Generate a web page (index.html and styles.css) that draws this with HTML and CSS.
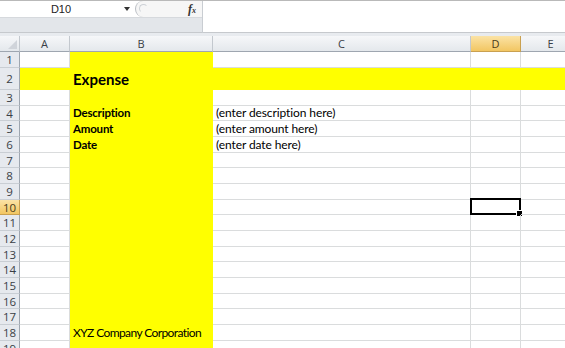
FILE: index.html
```html
<!DOCTYPE html>
<html lang="en">
<head>
  <meta charset="UTF-8">
  <title>Expense</title>
  <link rel="stylesheet" href="styles.css">
</head>
<body>

<div class="formula-bar">
  <div class="fb-left">
    <div class="fb-top">
      <div class="namebox">D10</div>
      <span class="nb-arrow"></span>
      <div class="fx-area">
        <span class="knob"></span>
        <span class="fx"><i>f</i><small>x</small></span>
      </div>
    </div>
    <div class="fb-band"></div>
  </div>
  <div class="fb-input"></div>
</div>

<div class="sheet" id="sheet"></div>

<script>
  // ============================
  // Sheet data
  // ============================
  const cols = ['A', 'B', 'C', 'D', 'E'];
  const cells = {
    'B2': { text: 'Expense', cls: 'title' },
    'B4': { text: 'Description', cls: 'bold' },
    'B5': { text: 'Amount', cls: 'bold' },
    'B6': { text: 'Date', cls: 'bold' },
    'C4': { text: '(enter description here)' },
    'C5': { text: '(enter amount here)' },
    'C6': { text: '(enter date here)' },
    'B18': { text: 'XYZ Company Corporation', cls: 'tight' }
  };
  const rowCount = 19;
  const activeCol = 'D';
  const activeRow = 10;

  // ============================
  // Build the grid
  // ============================
  const sheet = document.getElementById('sheet');

  function addCell(cls, text) {
    const div = document.createElement('div');
    div.className = cls;
    if (text) div.textContent = text;
    sheet.appendChild(div);
    return div;
  }

  addCell('corner');
  cols.forEach(c => {
    addCell('col-head' + (c === activeCol ? ' active' : ''), c);
  });

  for (let r = 1; r <= rowCount; r++) {
    addCell('row-head' + (r === activeRow ? ' active' : ''), r);
    cols.forEach(c => {
      let cls = 'cell';
      if (c === 'B' || r === 2) cls += ' fill';
      const data = cells[c + r];
      if (data && data.cls) cls += ' ' + data.cls;
      const cell = addCell(cls, data ? data.text : '');
      if (c === activeCol && r === activeRow) {
        const sel = document.createElement('span');
        sel.className = 'selection';
        cell.appendChild(sel);
      }
    });
  }
</script>

</body>
</html>
```

FILE: styles.css
```css
/* ============================
   Base
============================ */
* {
  box-sizing: border-box;
}

body {
  margin: 0;
  padding: 0;
  background: #fff;
  font-family: Lato, "Liberation Sans", sans-serif;
  color: #000;
  overflow: hidden;
}

/* ============================
   Formula bar
============================ */
.formula-bar {
  display: flex;
  height: 36px;
  border-top: 1px solid #b9b9b9;
  border-bottom: 3px solid #e8ebef;
}

.fb-left {
  width: 203px;
  display: flex;
  flex-direction: column;
  border-right: 1px solid #c9cdd2;
}

.fb-top {
  display: flex;
  align-items: center;
  height: 16px;
  background: #fff;
}

.namebox {
  width: 122px;
  text-align: center;
  font-family: "Liberation Sans", Arial, sans-serif;
  font-size: 11px;
  color: #222;
}

.nb-arrow {
  width: 0;
  height: 0;
  border-left: 3px solid transparent;
  border-right: 3px solid transparent;
  border-top: 4px solid #333;
  margin-left: 2px;
}

.fx-area {
  flex: 1;
  height: 16px;
  margin-left: 5px;
  display: flex;
  align-items: center;
  justify-content: flex-end;
  padding-right: 6px;
  position: relative;
  background: #f6f6f6;
  border-radius: 9px 0 0 9px;
  border-left: 1px solid #b8bcc2;
}

.knob {
  position: absolute;
  left: 3px;
  top: 3px;
  width: 9px;
  height: 9px;
  border-radius: 50%;
  border: 1px solid #cdd1d6;
  border-right-color: transparent;
  border-bottom-color: transparent;
}

.fx {
  font-family: "Liberation Serif", serif;
  font-size: 12px;
  font-weight: bold;
  color: #333;
}

.fx small {
  font-size: 8px;
  font-style: italic;
}

.fb-band {
  flex: 1;
  background: #e3e6ea;
  border-top: 1px solid #d6d9dd;
  border-bottom: 1px solid #c6c9cd;
}

.fb-input {
  flex: 1;
  background: #fff;
  border-bottom: 1px solid #c6c9cd;
}

/* ============================
   Sheet grid
============================ */
.sheet {
  display: grid;
  grid-template-columns: 20px 50px 143px 258px 50px 60px;
  grid-template-rows: 16px 16px 22px repeat(6, 16px 15px 16px);
  font-size: 12px;
}

.corner,
.col-head,
.row-head {
  background: linear-gradient(#f6f7f9, #e4e8ec);
  color: #3a3f46;
  font-family: "Open Sans", "Liberation Sans", sans-serif;
  font-size: 11px;
  display: flex;
  align-items: center;
  justify-content: center;
}

.corner {
  position: relative;
  border-right: 1px solid #c3c8ce;
  border-bottom: 1px solid #9ea6b0;
}

.corner::after {
  content: "";
  position: absolute;
  right: 2px;
  bottom: 2px;
  border-left: 9px solid transparent;
  border-bottom: 9px solid #d0d4da;
}

.col-head {
  border-right: 1px solid #c3c8ce;
  border-bottom: 1px solid #9ea6b0;
}

.row-head {
  background: #e6e9ee;
  border-right: 1px solid #9ea6b0;
  border-bottom: 1px solid #c9ced4;
  font-size: 11.5px;
}

.col-head.active,
.row-head.active {
  background: linear-gradient(#fbe3a6, #f2c662);
  border-color: #c9a050;
  color: #4a3b18;
}

.cell {
  position: relative;
  border-right: 1px solid #dadcdd;
  border-bottom: 1px solid #dadcdd;
  padding: 0 2px 0 3px;
  display: flex;
  align-items: flex-end;
  white-space: nowrap;
  line-height: 15px;
  letter-spacing: -0.1px;
}

.cell.fill {
  background: #ffff00;
  border-color: #ffff00;
}

.bold {
  font-weight: bold;
  font-size: 11.5px;
  letter-spacing: -0.2px;
}

.tight {
  letter-spacing: -0.6px;
}

.title {
  font-weight: bold;
  font-size: 15px;
  letter-spacing: 0;
  padding-bottom: 2px;
}

/* ============================
   Active cell
============================ */
.selection {
  position: absolute;
  left: -1px;
  top: -2px;
  right: -1px;
  bottom: -1px;
  border: 2px solid #000;
}

.selection::after {
  content: "";
  position: absolute;
  right: -4px;
  bottom: -4px;
  width: 5px;
  height: 5px;
  background: #000;
  border: 1px solid #fff;
}
```
